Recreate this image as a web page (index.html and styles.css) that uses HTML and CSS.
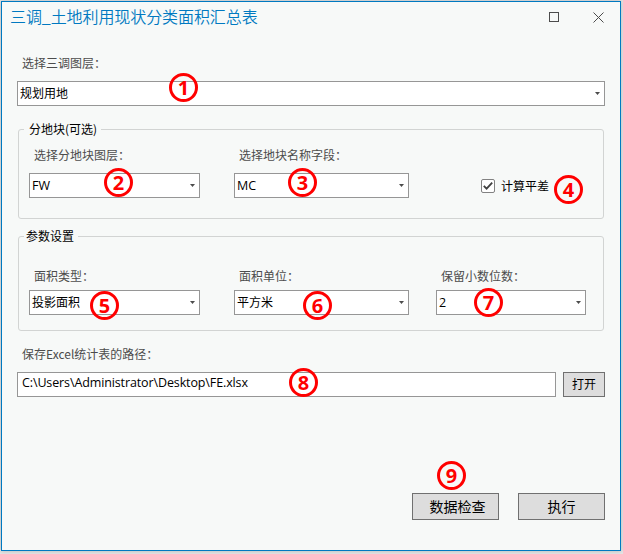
FILE: index.html
```html
<!DOCTYPE html>
<html lang="zh-CN">
<head>
<meta charset="utf-8">
<title>三调_土地利用现状分类面积汇总表</title>
<link rel="stylesheet" href="styles.css">
</head>
<body>
<main class="window">
  <header class="titlebar">
    <h1 class="title">三调_土地利用现状分类面积汇总表</h1>
    <svg class="max" width="10" height="10" viewBox="0 0 10 10"><rect x=".5" y=".5" width="9" height="9"/></svg>
    <svg class="close" width="11" height="11" viewBox="0 0 11 11"><path d="M.5 .5L10.500 10.500M10.500 .5L.5 10.500"/></svg>
  </header>

  <section class="layer">
    <div class="label">选择三调图层：</div>
    <div class="combo"><span>规划用地</span><i class="arrow"></i></div>
  </section>

  <section class="group parcel">
    <div class="legend">分地块(可选)</div>
    <div class="columns">
      <div>
        <div class="label">选择分地块图层：</div>
        <div class="combo"><span class="latin">FW</span><i class="arrow"></i></div>
      </div>
      <div>
        <div class="label">选择地块名称字段：</div>
        <div class="combo"><span class="latin">MC</span><i class="arrow"></i></div>
      </div>
      <div class="check">
        <span class="box"><svg width="12" height="12" viewBox="0 0 12 12"><path d="M1.800 5.800L4.600 8.700L10.200 2.700"/></svg></span>
        <span>计算平差</span>
      </div>
    </div>
  </section>

  <section class="group params">
    <div class="legend">参数设置</div>
    <div class="columns">
      <div>
        <div class="label">面积类型：</div>
        <div class="combo"><span>投影面积</span><i class="arrow"></i></div>
      </div>
      <div>
        <div class="label">面积单位：</div>
        <div class="combo"><span>平方米</span><i class="arrow"></i></div>
      </div>
      <div>
        <div class="label">保留小数位数：</div>
        <div class="combo"><span class="latin">2</span><i class="arrow"></i></div>
      </div>
    </div>
  </section>

  <section class="output">
    <div class="label">保存Excel统计表的路径：</div>
    <div class="path-row">
      <div class="path"><span>C:\Users\Administrator\Desktop\FE.xlsx</span></div>
      <div class="button small">打开</div>
    </div>
  </section>

  <footer class="actions">
    <div class="button wide-text">数据检查</div>
    <div class="button">执行</div>
  </footer>
</main>

<span class="mark m1">1</span>
<span class="mark m2">2</span>
<span class="mark m3">3</span>
<span class="mark m4">4</span>
<span class="mark m5">5</span>
<span class="mark m6">6</span>
<span class="mark m7">7</span>
<span class="mark m8">8</span>
<span class="mark m9">9</span>
</body>
</html>
```
FILE: styles.css
```css
* { box-sizing: border-box; }

body {
  margin: 0;
  padding: 1px;
  height: 554px;
  overflow: hidden;
  background: #e4e4e4;
  font: 12px/16px "Noto Sans CJK SC", sans-serif;
  color: #000;
}

.window {
  width: 620px;
  height: 550px;
  border: 1px solid #0079c1;
  background: #f7f9f8;
  box-shadow: 0 0 4px rgba(0, 0, 0, .22);
}

.titlebar {
  display: flex;
  align-items: center;
  height: 31px;
  padding: 0 16px 1px 8px;
}

.title {
  flex: 1;
  margin: 0;
  padding-bottom: 2px;
  font-size: 16px;
  font-weight: 350;
  line-height: 28px;
  letter-spacing: -.08px;
  color: #0079c1;
}

.titlebar svg {
  fill: none;
  stroke: #4c4c4c;
  stroke-width: 1;
}

.max { margin-right: 34px; }

.label {
  height: 26px;
  padding-left: 5px;
  color: #4c4c4c;
  white-space: nowrap;
}

.combo {
  display: flex;
  align-items: center;
  justify-content: space-between;
  height: 25px;
  padding: 0 4px 0 2px;
  border: 1px solid #969696;
  background: #fff;
}

.combo span { padding-bottom: 1px; }

.latin {
  font-family: "Open Sans", sans-serif;
  font-size: 12.500px;
}

.combo .latin { padding-bottom: 0; }

.arrow {
  width: 5px;
  height: 3px;
  background: #4c4c4c;
  clip-path: polygon(0 0, 100% 0, 50% 100%);
}

.layer { padding: 22px 15px 0; }

.group {
  margin: 23px 16px 0;
  border: 1px solid #d2d4d3;
  border-radius: 3px;
}

.legend {
  width: max-content;
  height: 16px;
  margin-top: -9px;
  margin-left: 5px;
  background: #f7f9f8;
}

.columns { display: grid; }

.parcel { height: 90px; }
.parcel .legend { padding: 0 4px 0 5px; }
.parcel .columns {
  grid-template-columns: 171px 175px 120px;
  column-gap: 34px;
  padding: 10px 0 0 10px;
}

.check {
  display: flex;
  align-items: center;
  gap: 6px;
  height: 16px;
  margin: 31px 0 0 38px;
}

.box {
  width: 14px;
  height: 14px;
  border: 1px solid #828282;
  border-radius: 2px;
  background: #fff;
}

.box svg {
  display: block;
  fill: none;
  stroke: #404040;
  stroke-width: 1.800;
}

.params { height: 95px; margin-top: 17px; }
.params .legend { padding: 0 4px 0 2px; }
.params .columns {
  grid-template-columns: 171px 175px 150px;
  column-gap: 34px;
  padding: 24px 0 0 10px;
}
.params .label { height: 22px; }
.params .columns > :last-child { margin-left: -7px; margin-right: 7px; }

.output { padding: 15px 15px 0; }

.path-row { display: flex; gap: 7px; }

.path {
  flex: 1;
  padding: 2px 4px;
  border: 1px solid #969696;
  background: #fff;
  font-family: "Open Sans", sans-serif;
  font-size: 12.500px;
  letter-spacing: -.12px;
  white-space: nowrap;
}

.button {
  display: flex;
  align-items: center;
  justify-content: center;
  width: 87px;
  height: 27px;
  padding-bottom: 1px;
  border: 1px solid #707070;
  background: #ddd;
  font-size: 14px;
}

.small { width: 42px; height: 25px; font-size: 12px; }
.wide-text { padding-left: 4px; }

.actions {
  display: flex;
  justify-content: flex-end;
  gap: 19px;
  padding: 96px 15px 0;
}

/* Numbered callouts laid over the form */
.mark {
  position: absolute;
  width: 29px;
  height: 29px;
  border: 3px solid #f00;
  border-radius: 50%;
  color: #f00;
  font: 700 20px/23px "Open Sans", sans-serif;
  text-align: center;
}

.m1 { left: 169px; top: 73px; }
.m2 { left: 104px; top: 168px; }
.m3 { left: 288px; top: 168px; }
.m4 { left: 554px; top: 175px; }
.m5 { left: 90px; top: 291px; }
.m6 { left: 303px; top: 291px; }
.m7 { left: 474px; top: 288px; }
.m8 { left: 289px; top: 368px; }
.m9 { left: 437px; top: 461px; }
```
